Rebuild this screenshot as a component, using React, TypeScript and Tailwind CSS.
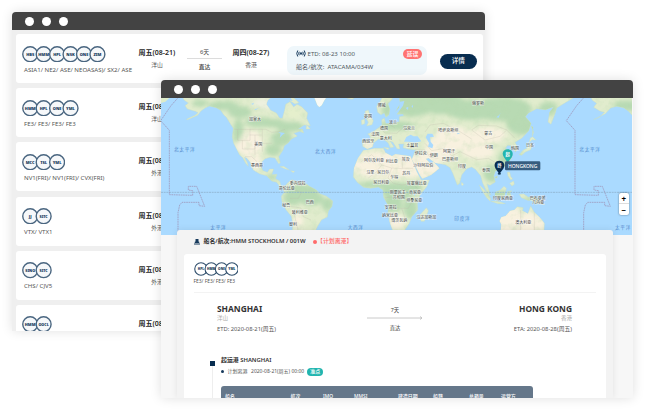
import React from "react";

const sans = "font-['Noto_Sans','Noto_Sans_CJK_SC',sans-serif]";

function TitleBar() {
  return (
    <div className="flex h-[18px] shrink-0 items-center gap-2 bg-[#434343] pl-[13px]">
      {[0, 1, 2].map((i) => (
        <span key={i} className="size-[9px] rounded-full bg-white" />
      ))}
    </div>
  );
}

function Carriers({ names, small = false }: { names: string[]; small?: boolean }) {
  const size = small ? 14 : 16.4;
  const pitch = small ? 10.3 : 13.45;
  const width = size + pitch * (names.length - 1);
  return (
    <svg className="block" width={width} height={size} viewBox={`0 0 ${width} ${size}`}>
      {names.map((n, i) => {
        const cx = size / 2 + i * pitch;
        return (
          <g key={n}>
            <circle
              cx={cx}
              cy={size / 2}
              r={size / 2 - 0.75}
              fill={small ? "#ffffff" : "#f6f8fa"}
              stroke={small ? "#2f4e6c" : "#4a6680"}
              strokeWidth={small ? 1.1 : 1.4}
            />
            <text
              x={cx}
              y={size / 2 + (small ? 1.2 : 1.4)}
              textAnchor="middle"
              fontSize={small ? 3.2 : n.length > 3 ? 3.7 : 4}
              fontWeight="900"
              fill="#173a5c"
            >
              {n}
            </text>
          </g>
        );
      })}
    </svg>
  );
}

interface Sailing {
  carriers: string[];
  codes: string;
  port: string;
}

const sailings: Sailing[] = [
  { carriers: ["HBS", "HMM", "HPL", "NSK", "ONE", "ZIM"], codes: "ASIA1/ NE2/ ASE/ NEOASAS)/ SX2/ ASE", port: "洋山" },
  { carriers: ["HMM", "HPL", "ONE", "YML"], codes: "FE3/ FE3/ FE3/ FE3", port: "洋山" },
  { carriers: ["MCC", "TSL", "YML"], codes: "NV1(FRI)/ NV1(FRI)/ CVX(FRI)", port: "外港" },
  { carriers: ["JJ", "SITC"], codes: "VTX/ VTX1", port: "外港" },
  { carriers: ["SINO", "SITC"], codes: "CHS/ CJV5", port: "外港" },
  { carriers: ["HMM", "OOCL"], codes: "", port: "" },
];

function PortDate({ date, port }: { date: string; port: string }) {
  return (
    <div className="flex w-[40px] shrink-0 flex-col items-center whitespace-nowrap pt-[3.500px]">
      <span className="text-[7px] leading-[8px] font-semibold text-[#262626]">{date}</span>
      <span className="mt-[4px] text-[5.8px] leading-[8px] text-[#555]">{port}</span>
    </div>
  );
}

function SailingCard({ s, first }: { s: Sailing; first: boolean }) {
  return (
    <div className="flex h-[49px] shrink-0 rounded-[3px] bg-white pt-[11.5px] pl-[6.500px]">
      <div className="w-[115px] shrink-0">
        <Carriers names={s.carriers} />
        <div className="mt-[3.7px] pl-[2px] text-[6.1px] leading-[8px] whitespace-nowrap text-[#555]">{s.codes}</div>
      </div>
      <PortDate date="周五(08-21)" port={s.port} />
      {first && (
        <>
          <div className="ml-[10px] flex w-[35px] shrink-0 flex-col items-center text-[5.8px] leading-[8px] text-[#444]">
            <span className="mt-[2.500px]">6天</span>
            <span className="mt-[2px] mb-[4px] h-px w-full bg-[#dcdcdc]" />
            <span className="font-medium">直达</span>
          </div>
          <div className="ml-[9px]">
            <PortDate date="周四(08-27)" port="香港" />
          </div>
          <div className="ml-[16px] flex h-[29px] w-[140px] shrink-0 flex-col justify-center gap-[4.5px] rounded-[7px] bg-[#eff7fb] pr-[5px] pl-[9px] text-[6.1px] leading-[8px] text-[#505860]">
            <div className="flex items-center">
              <svg className="mr-[1.5px] h-[7px] w-[10px]" viewBox="0 0 20 14" fill="none" stroke="#173a5c" strokeWidth="2">
                <circle cx="10" cy="7" r="1.6" fill="#173a5c" />
                <path d="M6.5 3.5Q4 7 6.5 10.500M13.5 3.5Q16 7 13.5 10.500M3.500 1Q-.5 7 3.500 13M16.500 1Q20.500 7 16.500 13" />
              </svg>
              <span className="flex-1">ETD: 08-23 10:00</span>
              <span className="flex h-[10px] w-[19px] items-center justify-center rounded-full bg-[#ff7372] text-[5.8px] font-medium text-white">延误</span>
            </div>
            <div>船名/航次:&nbsp; ATACAMA/034W</div>
          </div>
          <div className="mt-[8.500px] ml-[12.500px] flex h-[14.500px] w-[37.500px] shrink-0 items-center justify-center rounded-full bg-[#082d50] text-[6.6px] font-medium text-white">
            详情
          </div>
        </>
      )}
    </div>
  );
}

const northAmerica =
  "M78 60L88 76L100 84L90 92L97 102L110 106L121 109L129 113L120 121L94 133L98 134L128 121L138 108L150 99L163 93L184 98L197 106L206 119L214 127L225 145L235 160L232 185L236 205L248 228L254 240L263 248L272 265L280 274L276 261L268 247L275 249L286 262L295 285L315 297L335 302L350 318L365 322L375 335L385 341L389 333L378 333L374 318L361 311L366 298L350 299L356 282L344 282L337 292L324 287L317 272L321 260L330 251L345 247L360 249L371 266L376 263L371 245L384 225L388 212L400 203L408 193L427 183L416 175L434 169L446 174L442 162L428 163L447 150L466 152L455 130L458 114L440 95L426 88L416 96L405 80L392 88L389 105L382 130L374 129L364 114L347 106L334 88L338 76L355 62Z";
const southAmerica =
  "M383 341L400 322L411 314L424 319L445 320L463 334L484 345L494 356L513 363L533 378L531 394L520 408L517 426L500 434L487 455L476 480H410L414 448L409 424L393 404L381 380L379 364L388 352Z";
const africa =
  "M130 226L146 224L165 220L190 220L196 233L216 244L226 238L249 241L271 244L278 260L290 290L303 315L328 315L320 335L300 360L292 385L293 405L275 425L268 445L253 467H218L209 440L204 410L204 390L191 367L189 345L175 336L152 340L131 337L112 322L100 306L102 280L114 250Z";
const eurasia =
  "M128 198L152 195L149 182L143 177L159 170L176 158L186 150L185 134L193 129L197 146L221 145L238 140L238 125L252 122L249 117L233 118L227 110L233 99L241 87L237 60H760V69L738 82L710 99L706 113L693 148L684 141L689 112L701 95L677 104L650 101L625 114L616 125L633 145L626 167L605 190L585 202L595 221L586 230L574 212L563 211L556 220L573 229L576 246L562 270L541 284L526 288L521 303L526 321L510 331L501 327L508 350L512 359L502 354L488 324L482 302L466 283L455 276L440 281L425 300L419 325L412 330L398 294L390 278L376 269L345 263L326 249L317 251L332 267L340 261L353 274L358 280L334 299L307 311L300 300L276 253L281 239L287 225L266 223L249 218L252 207L236 207L240 222L231 221L219 202L210 198L222 216L211 218L204 203L191 193L176 192L161 203L157 216L142 222L128 214Z";
const scandinavia = "M173 112L170 94L179 83L190 60H216L217 72L204 86L209 103L207 119L198 127L193 113L183 119Z";
const islands = [
  "M135 109L145 105L149 118L160 137L156 149L140 153L145 142L138 129Z",
  "M124 136L134 132L134 146L125 149Z",
  "M300 419L319 398L325 407L313 439L303 439Z",
  "M425 322L431 328L427 332L424 329Z",
  "M190 217L208 219L204 224Z",
];
const asianIslands = [
  "M13 330L22 338L40 358L47 371L45 378L35 368L21 347Z",
  "M47 379L66 379L79 382L91 386L70 386Z",
  "M60 352L75 346L87 334L94 340L91 352L86 370L67 367L60 361Z",
  "M98 350L110 347L105 354L111 371L103 364L99 375L96 363Z",
  "M97 292L104 291L107 304L113 312L107 315L99 303Z",
  "M104 325L116 318L118 328L111 333Z",
  "M133 358L146 357L160 367L180 367L195 376L208 389L196 385L181 387L170 376L158 376L139 368Z",
  "M77 470L79 448L74 438L79 427L92 423L105 408L118 405L127 395L145 398L142 407L159 416L167 393L178 412L195 428L208 445L207 470Z",
  "M133 239L144 226L157 219L163 206L171 211L167 224L151 231L140 241Z",
  "M162 203L171 194L183 195L173 185L166 189Z",
  "M172 183L174 156L169 154L176 172Z",
  "M59 307L67 303L66 310Z",
];
const alaska = "M344 60L352 76L365 85L356 97L376 109L388 112L374 126L356 134L391 116L407 99L425 94L446 98L460 108L480 130L510 160V60Z";
const americasIslands = [
  "M474 60L480 72L487 90L493 96L500 91L508 76L519 60Z",
  "M375 275L386 274L403 285L389 281Z",
  "M407 287L419 289L415 293Z",
  "M455 149L466 162L453 162Z",
  "M576 69L588 66L598 69L591 73Z",
  "M401 65L417 69L432 83L420 87L405 78Z",
];

type Label = [string, number, number];
const labels: Label[] = [
  ["加拿大", 300, 133], ["美国", 310, 208], ["墨西哥", 306, 271], ["委内瑞拉", 428, 326], ["哥伦比亚", 395, 341], ["秘鲁", 394, 392],
  ["巴西", 464, 382], ["玻利维亚", 434, 411], ["智利", 414, 448],
  ["挪威", 680, 92], ["英国", 639, 125], ["德国", 687, 161], ["波兰", 714, 142], ["乌克兰", 762, 161], ["法国", 661, 178], ["意大利", 692, 190],
  ["西班牙", 640, 198], ["土耳其", 772, 212], ["伊拉克", 797, 235], ["伊朗", 836, 241], ["阿富汗", 882, 230], ["巴基斯坦", 885, 252],
  ["印度", 921, 275], ["哈萨克斯坦", 880, 167], ["阿尔及利亚", 657, 255], ["利比亚", 710, 258], ["埃及", 752, 254], ["沙特阿拉伯", 805, 271],
  ["马里", 646, 293], ["尼日尔", 685, 293], ["苏丹", 754, 296], ["乍得", 718, 307], ["尼日利亚", 679, 322], ["埃塞俄比亚", 785, 324],
  ["刚果民主", 728, 353], ["共和国", 731, 366], ["肯尼亚", 780, 352], ["坦桑尼亚", 778, 375], ["安哥拉", 707, 397], ["纳米比亚", 705, 420],
  ["博茨瓦纳", 733, 435], ["马达加斯加", 814, 428], ["俄罗斯", 969, 84], ["蒙古", 1000, 175], ["中国", 1002, 217], ["韩国", 1080, 221],
  ["日本", 1125, 210], ["泰国", 993, 285], ["印度尼西亚", 1044, 369], ["巴布亚新", 1148, 370], ["几内亚", 1150, 382], ["澳大利亚", 1105, 441],
];
const oceans: Label[] = [["北太平洋", 89, 222], ["北大西洋", 512, 230], ["太平洋", 190, 458], ["大西洋", 602, 456], ["印度洋", 922, 429], ["北太平洋", 1305, 222], ["太平洋", 1404, 458]];

// x, y, rx, ry of forest, desert and upland tints
const forests = [
  [205, 92, 45, 14], [255, 112, 35, 18], [315, 142, 45, 15], [360, 145, 35, 12], [250, 170, 16, 38], [405, 155, 42, 15], [380, 190, 32, 22], [355, 225, 25, 17],
  [440, 345, 50, 18], [415, 370, 30, 20], [470, 370, 35, 22], [135, 85, 24, 10], [350, 306, 18, 8], [517, 388, 18, 20],
  [725, 350, 45, 28], [710, 390, 34, 22], [665, 330, 65, 10], [772, 340, 30, 20], [767, 400, 20, 32],
  [770, 90, 65, 35], [860, 85, 70, 33], [950, 105, 80, 30], [1040, 102, 90, 36], [1100, 145, 46, 35], [725, 152, 55, 13],
  [1065, 250, 34, 30], [1010, 295, 25, 26], [1035, 360, 42, 12], [1148, 373, 45, 8], [695, 105, 15, 22], [1180, 100, 28, 20], [1415, 92, 40, 16],
];
const deserts = [
  [288, 208, 34, 42], [300, 260, 18, 24], [255, 215, 12, 18], [690, 270, 100, 42], [770, 275, 42, 32], [808, 272, 48, 38],
  [860, 220, 50, 36], [895, 182, 54, 28], [950, 205, 50, 26], [1000, 180, 55, 24], [970, 231, 48, 22], [1060, 435, 48, 40], [1115, 445, 54, 34], [725, 441, 24, 22], [430, 440, 15, 25], [640, 210, 18, 12],
];

function DateLine({ dx }: { dx: number }) {
  return (
    <path
      transform={`translate(${dx} 0)`}
      d="M72 65L48 92L17 137L43 166V359L113 361V347L100 345V334H125L149 394L132 392V382L81 382L74 390L69 413V480"
      fill="none"
      stroke="#9d91b5"
      strokeWidth="2.200"
      strokeDasharray="5 2"
    />
  );
}

function LandShapes() {
  return (
    <>
      <path d={northAmerica} />
      <path d={southAmerica} />
      {americasIslands.map((d) => <path key={d} d={d} />)}
      <g transform="translate(495 0)">
        <path d={africa} />
        <path d={eurasia} />
        <path d={scandinavia} />
        {islands.map((d) => <path key={d} d={d} />)}
      </g>
      <g transform="translate(960 0)">
        {asianIslands.map((d) => <path key={d} d={d} />)}
        <path d={alaska} />
      </g>
    </>
  );
}

function WorldMap() {
  return (
    <svg className="block h-[137px] w-[471px]" viewBox="18 69 1413 411">
      <defs>
        <clipPath id="land">
          <path d={northAmerica} />
          <path d={southAmerica} />
          <path d={africa} transform="translate(495 0)" />
          <path d={eurasia} transform="translate(495 0)" />
          <path d={scandinavia} transform="translate(495 0)" />
          <path d={alaska} transform="translate(960 0)" />
          {asianIslands.map((d) => <path key={d} d={d} transform="translate(960 0)" />)}
        </clipPath>
        <filter id="soft"><feGaussianBlur stdDeviation="7" /></filter>
        <filter id="relief" x="0" y="0" width="100%" height="100%">
          <feTurbulence type="fractalNoise" baseFrequency="0.045" numOctaves="3" seed="8" />
          <feColorMatrix values="0 0 0 0 .48  0 0 0 0 .70  0 0 0 0 .43  1.8 0 0 0 -.85" />
        </filter>
      </defs>
      <rect x="0" y="60" width="1450" height="430" fill="#aadaff" />
      <g fill="#e1eccd" stroke="#c8dfc4" strokeWidth="1.200"><LandShapes /></g>
      <path d="M18 69H43L31 80L18 84Z" fill="#deecc9" />
      <g clipPath="url(#land)">
        <g filter="url(#soft)">
          {forests.map(([x, y, rx, ry], i) => <ellipse key={i} cx={x} cy={y} rx={rx} ry={ry} fill="#b8dab3" />)}
          {deserts.map(([x, y, rx, ry], i) => <ellipse key={i} cx={x} cy={y} rx={rx} ry={ry} fill="#f8f1df" />)}
          <ellipse cx="330" cy="85" rx="35" ry="16" fill="#edf0df" />
          <ellipse cx="415" cy="115" rx="26" ry="16" fill="#e5efcc" />
        </g>
        <rect x="18" y="69" width="1413" height="411" filter="url(#relief)" opacity=".42" />
        <g fill="none" stroke="#bdb8aa" strokeWidth="1" opacity=".75">
          <path d="M238 163H333L350 172L370 170L390 163M248 163V196H285V163M285 180H322M262 196V222H300V196M300 180V240M322 163V230M322 205H350M270 245H290L306 260M407 322L415 345L440 352L430 370L405 370M383 380L410 395L438 399L445 425L468 435M415 405L430 470" />
          <path d="M618 260L650 239L680 270L710 279L742 281V244M742 280H775M710 279L699 309L715 325L740 330L775 325M640 309L665 290L680 270M690 368L725 365L755 350L775 372L760 400L700 399M740 400L750 430L718 440M775 325L793 350M780 224L810 225L825 246L850 250M810 205L830 227L870 220L890 243L865 263M810 171L825 150L865 145L915 170L950 192M890 243L915 230L965 254L1000 250M950 165L990 195L1035 184L1055 165L1025 153L970 151L950 165M670 155L690 174L725 175L760 145M700 145L720 159M1055 165L1080 190M1000 250L1028 267L1037 284M1097 405V470M1138 400V470" />
        </g>
      </g>
      <g fill="#aadaff">
        <path d="M747 200L754 186L767 179L776 184L788 184L799 199L780 203L762 200Z" />
        <path d="M812 187L818 176L832 176L837 185L825 187L827 200L835 210L832 220L819 215L822 204Z" />
        <path d="M716 126L728 114L744 92L748 78L735 80L732 98L717 114Z" />
        <path d="M752 99L760 95L759 105ZM769 94L774 90L774 99ZM370 171L390 174L382 180L374 188L377 176Z" />
        <path d="M906 173L915 175L908 178ZM775 354L783 356L778 363ZM288 87L297 83L294 89ZM299 103L312 99L301 106ZM1024 127L1033 120L1037 113L1031 128Z" />
        <path d="M350 62H373L378 81L392 88L382 92L360 80ZM394 62L398 74L413 78L405 66Z" />
      </g>
      <path d="M474 60L480 72L487 90L493 96L500 91L508 76L519 60Z" fill="#f8fbf7" />
      <path d="M18 352H1431" stroke="#8dafcc" strokeWidth="2.300" strokeDasharray="6 2" />
      <DateLine dx={0} />
      <DateLine dx={1217} />
      <g fontFamily="'Noto Sans CJK SC', sans-serif" textAnchor="middle">
        <g fontSize="12" fill="#3c3f3f" stroke="#fff" strokeWidth="2.500" strokeOpacity=".65" paintOrder="stroke">
          {labels.map(([t, x, y]) => <text key={t} x={x} y={y + 5}>{t}</text>)}
        </g>
        <g fontSize="14" letterSpacing="2" fill="#4f86ca">
          {oceans.map(([t, x, y]) => <text key={`${t}${x}`} x={x} y={y + 5}>{t}</text>)}
        </g>
      </g>
      <g fontFamily="'Noto Sans', 'Noto Sans CJK SC', sans-serif" textAnchor="middle" fontWeight="700" fill="#fff">
        <path d="M1058 263L1047 247C1038 233 1046 223 1058 223S1078 233 1070 247Z" fill="#24b5af" />
        <text x="1058" y="243" fontSize="13">起</text>
        <ellipse cx="1033" cy="296" rx="5" ry="3" fill="#244865" />
        <path d="M1033 297L1022 281C1014 267 1022 257 1033 257S1053 267 1045 281Z" fill="#082d50" />
        <text x="1033" y="277" fontSize="13">终</text>
        <rect x="1050" y="259" width="106" height="27" rx="4" fill="#365d7f" />
        <text x="1103" y="278" fontSize="15" fontWeight="500" textLength="88">HONGKONG</text>
      </g>
    </svg>
  );
}

const columns: [string, string][] = [
  ["船名", "w-[65.5px]"], ["航次", "w-[32.5px]"], ["IMO", "w-[31px]"], ["MMSI", "w-[44px]"],
  ["建造日期", "w-[35px]"], ["船籍", "w-[36px]"], ["总箱量", "w-[32px]"], ["运营方", "w-[25px]"],
];

function VoyagePanel() {
  return (
    <div className="relative -mt-[5px] ml-[16px] h-[168px] w-[435.500px] rounded-t-[3px] bg-[#f3f3f3] px-[7px] shadow-[0_0_7px_rgba(0,0,0,0.09)]">
      <div className="flex h-[23.500px] items-center pl-[10px] text-[5.900px] font-semibold text-[#303030]">
        <svg className="mr-[3.500px] h-[6px] w-[6px]" viewBox="0 0 12 12" fill="#173a5c">
          <path d="M3 0H9V5L11 6L10 8H2L1 6L3 5ZM0 9H12V11H0Z" />
        </svg>
        <span className="w-[103px] whitespace-nowrap">船名/航次:HMM STOCKHOLM / 001W</span>
        <span className="ml-[6.500px] size-[4px] rounded-full bg-[#ff6b6b]" />
        <span className="text-[5.900px] font-medium whitespace-nowrap text-[#ff6b6b]">【计划离港】</span>
      </div>
      <div className="h-[145px] rounded-t-[3px] bg-white px-[9.500px] pt-[8px]">
        <Carriers small names={["HPL", "HMM", "ONE", "YML"]} />
        <div className="mt-[2px] h-[15px] border-b border-[#f3f3f3] text-[4.900px] leading-[7px] text-[#555]">FE3/ FE3/ FE3/ FE3</div>
        <div className="mt-[9px] flex justify-between pr-[24px] pl-[23.500px]">
          <div className="flex flex-col">
            <span className="text-[8.400px] leading-[13px] font-bold text-[#333]">SHANGHAI</span>
            <span className="text-[5.500px] leading-[7px] text-[#aaa]">洋山</span>
            <span className="mt-[3px] text-[5.800px] leading-[9px] text-[#555]">ETD: 2020-08-21(周五)</span>
          </div>
          <div className="flex w-[56px] flex-col items-center pt-[4px] text-[5.300px] leading-[8px] text-[#444]">
            <span>7天</span>
            <svg className="my-[2.500px] h-[4px] w-full" viewBox="0 0 56 4" fill="none" stroke="#bcbcbc" strokeWidth=".8">
              <path d="M0 2H55M53 .5L55 2L53 3.500" />
            </svg>
            <span className="mt-px">直达</span>
          </div>
          <div className="flex flex-col items-end">
            <span className="text-[8.400px] leading-[13px] font-bold text-[#333]">HONG KONG</span>
            <span className="text-[5.500px] leading-[7px] text-[#aaa]">香港</span>
            <span className="mt-[3px] text-[5.800px] leading-[9px] text-[#555]">ETA: 2020-08-28(周五)</span>
          </div>
        </div>
        <div className="mt-[22.500px] flex pl-[16.500px]">
          <div className="mt-[5px] flex w-[5px] shrink-0 flex-col items-center">
            <span className="size-[5px] bg-[#082d50]" />
            <span className="h-[40px] w-px bg-[#eee]" />
          </div>
          <div className="ml-[6px] w-[312px]">
            <div className="text-[5.900px] leading-[9px] font-semibold text-[#333]">起运港 SHANGHAI</div>
            <div className="mt-[1.500px] flex h-[10px] items-center text-[5px] whitespace-nowrap text-[#555]">
              <span className="mr-[4px] size-[2.500px] rounded-full bg-[#173a5c]" />
              <span>计划离港</span>
              <span className="ml-[3.500px]">2020-08-21(周五) 00:00</span>
              <span className="ml-[3px] flex h-[8px] w-[16px] items-center justify-center rounded-full bg-[#21b5af] text-[5px] font-medium text-white">准点</span>
            </div>
            <div className="mt-[9.500px] flex h-[24px] rounded-t-[3px] bg-[#65778a] pt-[6px] pl-[4px] text-[4.900px] leading-[9px] font-medium text-white">
              {columns.map(([c, w]) => <span key={c} className={`${w} shrink-0`}>{c}</span>)}
            </div>
          </div>
        </div>
      </div>
    </div>
  );
}

export default function App() {
  return (
    <div className={`relative h-[410px] w-[645px] overflow-hidden bg-white ${sans}`}>
      <div className="absolute top-[12px] left-[12px] flex h-[319px] w-[473px] flex-col overflow-hidden rounded-t-[4px] bg-[#efefef] shadow-[0_0_12px_rgba(0,0,0,0.12)]">
        <TitleBar />
        <div className="flex flex-col gap-[5.200px] pt-[4px] pr-[2px] pl-[3.500px]">
          {sailings.map((s, i) => <SailingCard key={i} s={s} first={i === 0} />)}
        </div>
      </div>
      <div className="absolute top-[80px] left-[161px] h-[318px] w-[472px] overflow-hidden rounded-t-[4px] bg-[#f7f7f7] shadow-[0_0_12px_rgba(0,0,0,0.13)]">
        <TitleBar />
        <WorldMap />
        <VoyagePanel />
        <div className="absolute top-[112.500px] right-[4px] flex h-[22px] w-[10.500px] flex-col rounded-[2px] bg-white text-center text-[8px] leading-[11px] font-bold text-black shadow-[0_0_2px_rgba(0,0,0,0.5)]">
          <span className="h-[11px] border-b border-[#ddd]">+</span>
          <span className="h-[11px]">−</span>
        </div>
      </div>
    </div>
  );
}
